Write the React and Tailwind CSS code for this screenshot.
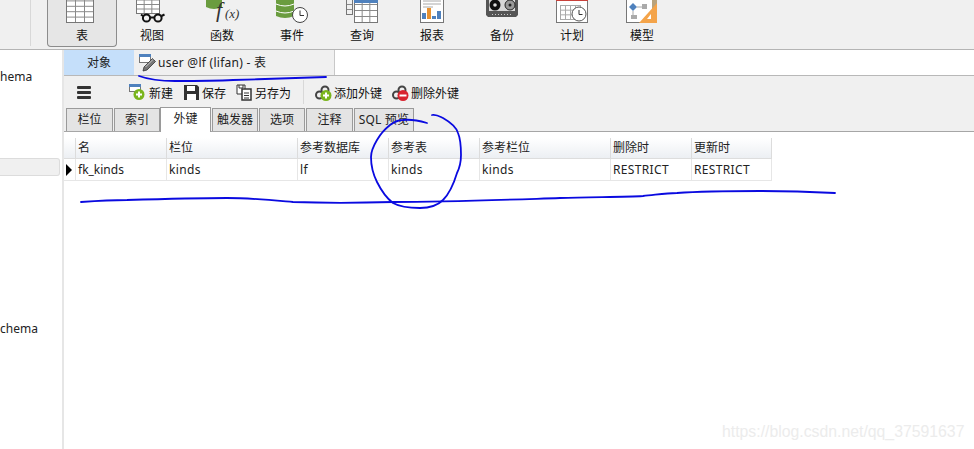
const FONT = { fontFamily: '"Noto Sans","Noto Sans CJK SC",sans-serif' };

function GridLines({ x, y, w, h, cols, rows, c = "#8a8a8a" }) {
  const l = [];
  for (let i = 1; i < cols; i++) { const p = x + (w * i) / cols; l.push(<line key={"c" + i} x1={p} x2={p} y1={y} y2={y + h} stroke={c} />); }
  for (let i = 1; i < rows; i++) { const p = y + (h * i) / rows; l.push(<line key={"r" + i} y1={p} y2={p} x1={x} x2={x + w} stroke={c} />); }
  return <>{l}<rect x={x} y={y} width={w} height={h} fill="none" stroke={c === "#8a8a8a" ? "#777" : c} /></>;
}

const TOP = {
  table: <><rect x="8.5" y="-3.5" width="27" height="26" fill="#fff" /><GridLines x={8.5} y={-4.5} w={27} h={27} cols={3} rows={5} /></>,
  view: <><rect x="8.5" y="-4.5" width="23" height="18" fill="#fff" /><GridLines x={8.5} y={-4.5} w={23} h={18} cols={3} rows={4} /><g fill="none" stroke="#111" strokeWidth="2"><circle cx="18.5" cy="18" r="3.6" fill="#f0f0f0" /><circle cx="30" cy="18" r="3.6" fill="#f0f0f0" /><path d="M22 17.5h4.500M15 16l-2-1.500M33.500 16l3-1.500" /></g></>,
  func: <><path d="M8 -3h16v10q-8 4-16 0z" fill="#6a9c3f" /><text x="18" y="17" fontFamily="Liberation Serif" fontStyle="italic" fontSize="22" fill="#333">f</text><text x="27" y="18" fontFamily="Liberation Serif" fontStyle="italic" fontSize="13" fill="#333">(x)</text></>,
  event: <><path d="M8 -3h18v19q-9 4-18 0z" fill="#6a9c3f" /><path d="M8 4q9 4 18 0M8 11q9 4 18 0" stroke="#fff" fill="none" /><circle cx="32" cy="15" r="7.500" fill="#fff" stroke="#444" /><path d="M32 10.500v5h4" fill="none" stroke="#333" /></>,
  query: <><GridLines x={8.5} y={-5.500} w={6} h={20} cols={1} rows={4} /><rect x="16.500" y="-4" width="23" height="26" fill="#fff" /><GridLines x={16.500} y={-1.500} w={23} h={24} cols={3} rows={4} /><rect x="16" y="-3" width="24" height="6" fill="#4f81bd" /></>,
  report: <><rect x="12.500" y="-3" width="23" height="25.500" fill="#fff" stroke="#777" /><path d="M15 1h18M15 4h18M15 7h10" stroke="#aaa" /><rect x="14" y="13" width="4" height="6" fill="#4f81bd" /><rect x="19" y="8" width="4" height="11" fill="#e8912f" /><rect x="24" y="16" width="4" height="3" fill="#4f81bd" /><rect x="29" y="11" width="4" height="8" fill="#4f81bd" /></>,
  backup: <><path d="M8 -3h32v18l-2 2H10l-2-2z" fill="#555" /><rect x="11" y="-3" width="26" height="14" fill="#d8d8d8" /><circle cx="17" cy="5" r="5.500" fill="#111" /><circle cx="17" cy="5" r="1.800" fill="#ddd" /><circle cx="32" cy="5" r="5" fill="#999" stroke="#222" /><circle cx="32" cy="5" r="1.500" fill="#222" /><path d="M14 14.500h20" stroke="#ccc" strokeDasharray="1 2" /></>,
  plan: <><rect x="8.500" y="-3" width="31" height="25.500" fill="#fff" stroke="#777" /><rect x="8" y="-3" width="32" height="4" fill="#c8413b" /><GridLines x={12.500} y={5.500} w={20} h={14} cols={4} rows={3} c="#aaa" /><circle cx="31" cy="14" r="7" fill="#fff" stroke="#555" /><path d="M31 10v4.500h3.500" fill="none" stroke="#333" /></>,
  model: <><rect x="8.500" y="-3" width="30" height="25.500" fill="#fff" stroke="#777" /><path d="M15 3l4 4-4 4-4-4z" fill="#4f81bd" /><rect x="24" y="4" width="5" height="5" fill="#aaa" /><rect x="13" y="15" width="6" height="4" fill="#aaa" /><path d="M19 7h5M15 11v4" stroke="#aaa" /><rect x="34" y="-3" width="5" height="12" fill="#b9a37c" /><path d="M39 3v20H21z" fill="#f4a44a" /><path d="M33 14v5h-4z" fill="#fff" /></>,
};

const items = [["表", "table"], ["视图", "view"], ["函数", "func"], ["事件", "event"], ["查询", "query"], ["报表", "report"], ["备份", "backup"], ["计划", "plan"], ["模型", "model"]];

function TopItem({ label, icon, active }) {
  return (
    <div className={"w-[70px] h-[47px] flex flex-col items-center shrink-0 box-border " + (active ? "border border-t-0 border-[#8c8c8c] rounded-b-[4px] bg-[#e6e6e6]" : "px-px")}>
      <svg width="48" height="24" viewBox="0 0 48 24" className="shrink-0">{TOP[icon]}</svg>
      <span className="text-[12px] leading-[20px] mt-[2px] text-[#111]">{label}</span>
    </div>
  );
}

const PlusBadge = ({ cx, cy, color = "#7ab51d" }) => <><circle cx={cx} cy={cy} r="5.500" fill={color} /><path d={`M${cx - 3} ${cy}h6M${cx} ${cy - 3}v6`} stroke="#fff" strokeWidth="2" /></>;
const Chain = () => <g fill="none" stroke="#444" strokeWidth="2"><circle cx="5.500" cy="11" r="3.500" /><circle cx="11" cy="6" r="3.500" /></g>;

const ICONS = {
  add: <svg width="18" height="17" viewBox="0 0 18 17"><rect x=".5" y=".5" width="11" height="7" fill="#fff" stroke="#777" /><rect x="0" y="0" width="12" height="3" fill="#4f81bd" /><PlusBadge cx={10} cy={10.500} /></svg>,
  save: <svg width="17" height="17" viewBox="0 0 17 17"><path d="M1 1h13l2 2v13H1z" fill="#333" /><rect x="4" y="2" width="8" height="5" fill="#fff" /><rect x="4" y="10" width="9" height="6" fill="#fff" /></svg>,
  saveas: <svg width="17" height="17" viewBox="0 0 17 17"><path d="M1 1h8v9H1z" fill="#fff" stroke="#333" /><path d="M3 1v3h4V1" fill="none" stroke="#333" /><path d="M6 5h9v11H6z" fill="#fff" stroke="#333" strokeWidth="1.500" /><path d="M8 9h5M8 11.500h5M8 14h5" stroke="#333" /></svg>,
  linkAdd: <svg width="18" height="17" viewBox="0 0 18 17"><Chain /><PlusBadge cx={12} cy={11.500} /></svg>,
  linkDel: <svg width="18" height="17" viewBox="0 0 18 17"><Chain /><circle cx="12" cy="11.500" r="5.500" fill="#d9232e" /><path d="M8.500 11.500h7" stroke="#fff" strokeWidth="2" /></svg>,
};

const ToolBtn = ({ icon, label, className = "", gap = "gap-[2px]" }) => (
  <div className={"flex items-center text-[12px] text-[#111] " + gap + " " + className}>{ICONS[icon]}<span className="mt-[4px]">{label}</span></div>
);

const tabs = [["栏位", "w-[47px] mr-px"], ["索引", "w-[46px]"], ["外键", "w-[51px] mr-px", true], ["触发器", "w-[46px] mr-px"], ["选项", "w-[46px] mr-px"], ["注释", "w-[47px] mr-px"], ["SQL 预览", "w-[60px] tracking-[0.2px]"]];

const cols = ["名", "栏位", "参考数据库", "参考表", "参考栏位", "删除时", "更新时"];
const row = ["fk_kinds", "kinds", "lf", "kinds", "kinds", "RESTRICT", "RESTRICT"];
const widths = ["w-[91px]", "w-[131px]", "w-[91px]", "w-[91px]", "w-[131px]", "w-[81px]", "w-[81px]"];

export default function App() {
  return (
    <div className="relative w-[974px] h-[449px] overflow-hidden bg-white flex flex-col" style={FONT}>
      <div className="h-[50px] shrink-0 bg-[#f0f0f0] border-b border-[#b4b4b4] flex items-start box-border">
        <div className="w-[30px] h-[46px] border-r border-[#d8d8d8] box-content shrink-0" />
        <div className="w-[16px] shrink-0" />
        {items.map(([l, i], n) => <TopItem key={l} label={l} icon={i} active={n === 0} />)}
      </div>
      <div className="flex-1 flex min-h-0">
        <div className="w-[64px] shrink-0 border-r-2 border-[#e6e6e6] box-border flex flex-col text-[12px] text-[#222]">
          <div className="mt-[18px] h-[18px] leading-[18px]">hema</div>
          <div className="mt-[72px] h-[18px] w-[60px] bg-[#f0f0f0] border border-l-0 border-[#dcdcdc] rounded-r-[3px] box-border" />
          <div className="mt-[144px] h-[18px] leading-[18px]">chema</div>
        </div>
        <div className="flex-1 flex flex-col min-w-0">
          <div className="h-[26px] shrink-0 flex border-b border-[#b8b8b8] box-border text-[12px] text-[#222]">
            <div className="w-[70px] bg-[#c5dffa] flex items-center justify-center">对象</div>
            <div className="w-[201px] bg-[#f0f0f0] border-r border-[#c8c8c8] flex items-center pl-[5px] gap-[2px] box-border">
              <svg width="17" height="18" viewBox="0 0 17 18"><rect x=".5" y=".5" width="11" height="8" fill="#fff" stroke="#777" /><rect x="0" y="0" width="12" height="3" fill="#4f81bd" /><path d="M4 17l1-4L13.500 4.500l3 3L8 16z" fill="#777" stroke="#333" strokeWidth=".8" /><path d="M6.500 13l7.500-7.500" stroke="#ddd" strokeWidth=".8" /></svg>
              <span className="tracking-[0.27px]">user @lf (lifan) - 表</span>
            </div>
          </div>
          <div className="h-[56px] shrink-0 bg-[#f0f0f0] flex flex-col">
            <div className="h-[32px] flex items-center relative">
              <div className="w-[14px] ml-[13px] flex flex-col gap-[2px] shrink-0">
                <div className="h-[3px] bg-[#333] rounded-[1px]" /><div className="h-[3px] bg-[#333] rounded-[1px]" /><div className="h-[3px] bg-[#333] rounded-[1px]" />
              </div>
              <ToolBtn icon="add" label="新建" className="ml-[38px]" />
              <ToolBtn icon="save" label="保存" className="ml-[10px]" />
              <ToolBtn icon="saveas" label="另存为" className="ml-[10px]" />
              <div className="w-px h-[24px] bg-[#d8d8d8] ml-[12px] shrink-0" />
              <ToolBtn icon="linkAdd" label="添加外键" className="ml-[10px]" />
              <ToolBtn icon="linkDel" label="删除外键" className="ml-[9px]" />
            </div>
            <div className="h-[24px] flex items-end pl-[2px] border-b border-[#a6a6a6] box-border text-[12px] text-[#222]">
              {tabs.map(([t, w, a]) => (
                <div key={t} className={w + " shrink-0 box-border flex items-center justify-center border border-[#9a9a9a] border-b-0 " + (a ? "h-[25px] -mb-px bg-white pb-[3px] relative z-10" : "h-[23px] bg-[#e4e4e4]")}>{t}</div>
              ))}
            </div>
          </div>
          <div className="pt-[6px] text-[12px] text-[#222]">
            <div className="flex h-[21px] bg-gradient-to-b from-white to-[#eceff3] border-b border-[#dddddd] w-[708px] box-border">
              <div className="w-[11px] shrink-0" />
              {cols.map((c, i) => <div key={c} className={widths[i] + " shrink-0 box-border border-l border-[#dcdcdc] pl-[2px] flex items-center " + (i === 6 ? "border-r" : "")}>{c}</div>)}
            </div>
            <div className="flex h-[22px] border-b border-[#e6e6e6] w-[708px] box-border">
              <div className="w-[11px] shrink-0 flex items-center justify-end pr-[3px]">
                <svg width="6" height="12" viewBox="0 0 6 12"><path d="M0 0l6 6-6 6z" fill="#000" /></svg>
              </div>
              {row.map((c, i) => <div key={i} className={widths[i] + " shrink-0 box-border border-l border-[#e6e6e6] pl-[2px] flex items-center " + (i === 0 ? "" : "tracking-[0.35px] ") + (i === 6 ? "border-r" : "")}>{c}</div>)}
            </div>
          </div>
        </div>
      </div>
      <svg className="absolute inset-0 pointer-events-none" width="974" height="449" viewBox="0 0 974 449" fill="none" stroke="#0a0ae0" strokeWidth="1.800" strokeLinecap="round" strokeLinejoin="round">
        <path d="M139 76C150 80 160 81 175 81C200 81 215 81 233 80C265 79 300 78 326 77" />
        <path d="M81 202C95 201 110 200 127 200C160 199 200 198 227 198C250 198 270 200 293 202C320 203 360 203 393 202C450 202 500 200 560 198C590 197 625 197 643 196C655 195 665 193 677 193C705 191 730 191 760 191C790 191 815 192 835 193" />
        <path d="M432 115C436 114 439 116 443 118C450 122 456 126 458 133C461 140 461 148 461 155C461 162 460 167 457 173C454 183 450 193 443 200C437 206 428 208 420 208C410 208 400 207 393 203C385 197 381 190 377 182C373 174 371 166 371 157C371 150 374 145 377 140C381 133 385 129 390 125C394 122 398 120 403 120C411 119 420 121 427 123" />
      </svg>
      <div className="absolute left-[722px] top-[422px] text-[15.8px] leading-[20px] text-[#ececec] whitespace-nowrap" style={{ fontFamily: '"Liberation Sans",sans-serif' }}>https://blog.csdn.net/qq_37591637</div>
    </div>
  );
}
